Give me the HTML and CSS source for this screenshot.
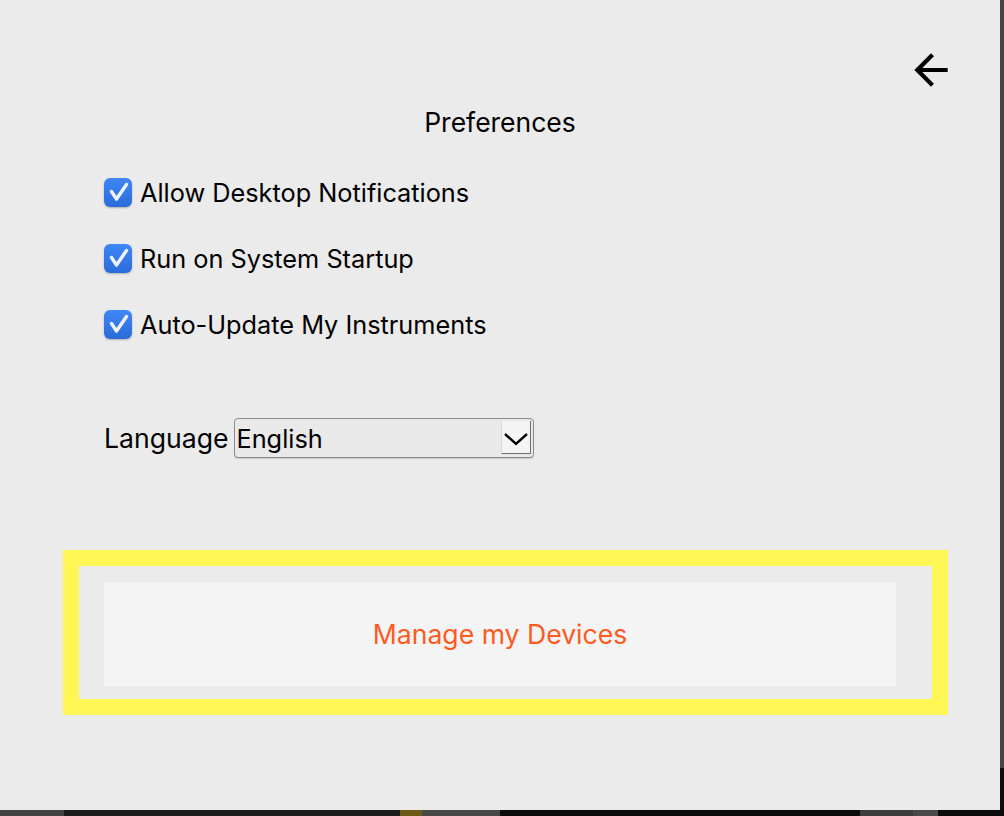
FILE: index.html
```html
<!DOCTYPE html>
<html lang="en">
<head>
  <meta charset="UTF-8">
  <title>Preferences</title>
  <link rel="stylesheet" href="styles.css">
</head>
<body>
  <div class="screen">
    <div class="window">
      <div class="topbar">
        <button class="back" aria-label="Back">
          <svg width="50" height="50" viewBox="0 0 24 24"><path d="M20 11H7.83l5.59-5.59L12 4l-8 8 8 8 1.41-1.41L7.83 13H20v-2z" fill="#000"/></svg>
        </button>
      </div>

      <h1 class="title">Preferences</h1>

      <div class="options">
        <label class="option">
          <span class="check"><svg width="28" height="28" viewBox="0 0 28 28"><path d="M7.5 13.5 L12.5 21 L22.5 6.5" fill="none" stroke="#eef4ff" stroke-width="3.4" stroke-linecap="round" stroke-linejoin="round"/></svg></span>
          Allow Desktop Notifications
        </label>
        <label class="option">
          <span class="check"><svg width="28" height="28" viewBox="0 0 28 28"><path d="M7.5 13.5 L12.5 21 L22.5 6.5" fill="none" stroke="#eef4ff" stroke-width="3.4" stroke-linecap="round" stroke-linejoin="round"/></svg></span>
          Run on System Startup
        </label>
        <label class="option">
          <span class="check"><svg width="28" height="28" viewBox="0 0 28 28"><path d="M7.5 13.5 L12.5 21 L22.5 6.5" fill="none" stroke="#eef4ff" stroke-width="3.4" stroke-linecap="round" stroke-linejoin="round"/></svg></span>
          Auto-Update My Instruments
        </label>
      </div>

      <div class="language">
        <label for="lang">Language</label>
        <div class="select-wrap">
          <select id="lang">
            <option>English</option>
          </select>
          <span class="select-arrow">
            <svg width="26" height="14" viewBox="0 0 26 14"><path d="M2 2 L13 12 L24 2" fill="none" stroke="#000" stroke-width="2.4"/></svg>
          </span>
        </div>
      </div>

      <div class="highlight">
        <button class="devices">Manage my Devices</button>
      </div>
    </div>
    <div class="edge-right"></div>
    <div class="edge-bottom"></div>
  </div>
</body>
</html>
```

FILE: styles.css
```css
html, body {
  margin: 0;
  background: #0c0c0c;
}
body {
  font-family: 'Inter', 'Liberation Sans', sans-serif;
  color: #000;
}
.screen {
  display: grid;
  grid-template-columns: 1000px 4px;
  grid-template-rows: 810px 6px;
}
.window {
  background: #ebebeb;
  display: flex;
  flex-direction: column;
}
.edge-right {
  background: linear-gradient(#444 0 768px, #0c0c0c 768px);
}
.edge-bottom {
  grid-column: 1 / span 2;
  background: linear-gradient(to right,
    #444 0 64px, #1c1c1c 64px 400px, #6b5a14 400px 422px, #474747 422px 500px,
    #0b0b0b 500px 860px, #3d3d3d 860px 913px, #4a4a4a 913px 938px, #0b0b0b 938px);
}
.topbar {
  display: flex;
  justify-content: flex-end;
  padding: 45px 44px 0 0;
}
.back {
  border: none;
  background: none;
  padding: 0;
  width: 50px;
  height: 50px;
  cursor: pointer;
}
.back svg {
  display: block;
}
.title {
  margin: 11px 0 0;
  font-size: 26.5px;
  font-weight: 400;
  line-height: 32px;
  text-align: center;
}
.options {
  display: flex;
  flex-direction: column;
  gap: 34px;
  margin: 38px 0 0 104px;
}
.option {
  display: flex;
  align-items: center;
  gap: 8px;
  height: 32px;
  font-size: 25.3px;
}
.check {
  width: 28px;
  height: 29px;
  border-radius: 6px;
  background: linear-gradient(#3f87f6, #2a6bd8);
  box-shadow: 0 1px 2px rgba(0,0,0,0.25);
  display: flex;
  align-items: center;
  justify-content: center;
}
.check svg {
  display: block;
}
.language {
  display: flex;
  align-items: center;
  gap: 6px;
  margin: 78px 0 0 104px;
  font-size: 26.6px;
}
.select-wrap {
  position: relative;
  width: 300px;
  height: 40px;
}
.select-wrap select {
  appearance: none;
  -webkit-appearance: none;
  width: 100%;
  height: 100%;
  box-sizing: border-box;
  border: 1px solid #8c8c8c;
  border-radius: 4px;
  background: #e9e9e9;
  font-family: inherit;
  font-size: 25.3px;
  color: #000;
  padding: 0 0 0 1px;
  box-shadow: 0 1px 1px rgba(0,0,0,0.15);
}
.select-arrow {
  position: absolute;
  top: 3px;
  right: 3px;
  width: 30px;
  height: 33px;
  box-sizing: border-box;
  background: #f4f4f4;
  border-left: 1px solid #d8d8d8;
  border-right: 1px solid #6f6f6f;
  border-bottom: 1px solid #6f6f6f;
  display: flex;
  align-items: center;
  justify-content: center;
  pointer-events: none;
}
.select-arrow svg {
  display: block;
  margin-top: 3px;
}
.highlight {
  margin: 92px 0 0 63px;
  width: 885px;
  box-sizing: border-box;
  border: 16px solid #fff755;
  padding: 16px 36px 13px 25px;
}
.devices {
  display: block;
  width: 100%;
  height: 104px;
  border: none;
  background: #f4f4f4;
  color: #ff5a22;
  font-family: inherit;
  font-size: 26.6px;
  cursor: pointer;
}
```
